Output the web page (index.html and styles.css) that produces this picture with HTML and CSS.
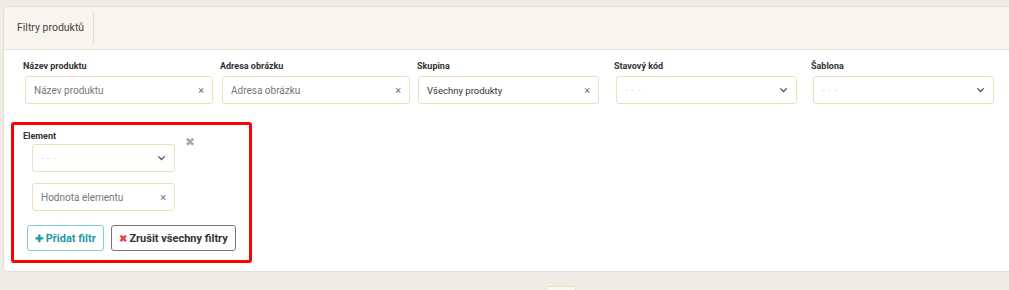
FILE: index.html
```html
<!DOCTYPE html>
<html lang="cs">
<head>
  <meta charset="UTF-8" />
  <meta name="viewport" content="width=device-width, initial-scale=1" />
  <title>Filtry produktů</title>
  <link rel="stylesheet" href="styles.css">
</head>
<body>

<div class="card">
  <div class="card-head">
    <span class="tab">Filtry produktů</span>
  </div>

  <div class="card-body">
    <div class="filters">
      <div class="field">
        <label>Název produktu</label>
        <div class="input wide"><span class="ph">Název produktu</span><span class="clear">×</span></div>
      </div>
      <div class="field">
        <label>Adresa obrázku</label>
        <div class="input wide"><span class="ph">Adresa obrázku</span><span class="clear">×</span></div>
      </div>
      <div class="field">
        <label>Skupina</label>
        <div class="input narrow shift"><span class="val">Všechny produkty</span><span class="clear">×</span></div>
      </div>
      <div class="field">
        <label>Stavový kód</label>
        <div class="input narrow"><span class="dash">- - -</span>
          <svg class="chev" viewBox="0 0 10 6"><path d="M1.5 1.2 5 4.6 8.5 1.2" /></svg>
        </div>
      </div>
      <div class="field">
        <label>Šablona</label>
        <div class="input narrow"><span class="dash">- - -</span>
          <svg class="chev" viewBox="0 0 10 6"><path d="M1.5 1.2 5 4.6 8.5 1.2" /></svg>
        </div>
      </div>
    </div>

    <div class="element-box">
      <div class="element-row">
        <div class="element-fields">
          <label>Element</label>
          <div class="input small"><span class="dash">- - -</span>
            <svg class="chev" viewBox="0 0 10 6"><path d="M1.5 1.2 5 4.6 8.5 1.2" /></svg>
          </div>
          <div class="input small"><span class="ph">Hodnota elementu</span><span class="clear">×</span></div>
        </div>
        <span class="remove">✖</span>
      </div>

      <div class="actions">
        <button class="btn btn-add"><span class="plus">✚</span> Přidat filtr</button>
        <button class="btn btn-reset"><span class="cross">✖</span> Zrušit všechny filtry</button>
      </div>
    </div>
  </div>
</div>

<div class="pager">
  <span class="page-btn"></span>
</div>

</body>
</html>
```

FILE: styles.css
```css
body {
  font-family: Roboto, "Liberation Sans", sans-serif;
  background: #efece5;
  margin: 0;
  padding: 0;
  color: #333;
  overflow: hidden;
}

.card {
  margin: 6px -12px 0 3px;
  background: white;
  border: 1px solid #e4e0d6;
  border-radius: 5px;
}

.card-head {
  height: 42px;
  background: #f8f5ee;
  border-bottom: 1px solid #e8e2d4;
  border-radius: 5px 5px 0 0;
  display: flex;
  align-items: center;
  padding-left: 13px;
}

.tab {
  font-size: 10.5px;
  color: #444;
  padding-right: 9px;
  height: 30px;
  line-height: 30px;
  border-right: 1px solid #e0dbd0;
}

.card-body {
  padding: 11px 0 8px 7px;
}

.filters {
  display: grid;
  grid-template-columns: repeat(5, 197px);
  padding-left: 12px;
}

.field label,
.element-fields label {
  display: block;
  font-size: 9px;
  font-weight: bold;
  color: #333;
  height: 10px;
  line-height: 10px;
  margin-bottom: 5px;
}

.input {
  box-sizing: border-box;
  height: 28px;
  border: 1px solid #eedfbf;
  border-radius: 3px;
  display: flex;
  align-items: center;
  justify-content: space-between;
  padding: 0 8px 0 8px;
  font-size: 10px;
  background: white;
}

.input.wide {
  width: 188px;
  margin-left: 2px;
}

.input.narrow {
  width: 181px;
  margin-left: 2px;
}

.input.shift {
  margin-left: 1px;
}

.ph {
  color: #777;
}

.val {
  color: #333;
  font-size: 9.5px;
}

.dash {
  color: #ccc;
  font-size: 8px;
  letter-spacing: 1px;
}

.clear {
  color: #6a7380;
  font-size: 11px;
}

.chev {
  width: 9px;
  height: 6px;
  fill: none;
  stroke: #555;
  stroke-width: 1.5;
}

.element-box {
  margin-top: 18px;
  width: 226px;
  border: 3px solid #f00;
  border-radius: 3px;
  padding: 6px 0 9px 9px;
}

.element-row {
  display: flex;
  align-items: flex-start;
}

.element-fields label {
  margin-bottom: 3px;
}

.input.small {
  width: 143px;
  margin-left: 9px;
  margin-bottom: 11px;
}

.remove {
  color: #aaa;
  font-size: 12px;
  margin: 4px 0 0 10px;
}

.actions {
  display: flex;
  gap: 7px;
  margin-top: 3px;
  margin-left: 4px;
}

.btn {
  font-family: Roboto, "Liberation Sans", sans-serif;
  font-weight: bold;
  font-size: 11px;
  height: 26px;
  padding: 0 7px;
  background: white;
  border-radius: 3px;
  cursor: pointer;
}

.btn-add {
  color: #1d9aaa;
  border: 1px solid #7fcdd6;
}

.btn-reset {
  color: #333;
  border: 1px solid #777;
}

.plus {
  font-size: 10px;
}

.cross {
  color: #e8474e;
  font-size: 10px;
}

.pager {
  display: flex;
  padding-left: 546px;
  margin-top: 14px;
  height: 4px;
}

.page-btn {
  width: 28px;
  height: 20px;
  background: #fbf8f0;
  border: 1px solid #eedfbf;
  border-radius: 3px;
}
```
